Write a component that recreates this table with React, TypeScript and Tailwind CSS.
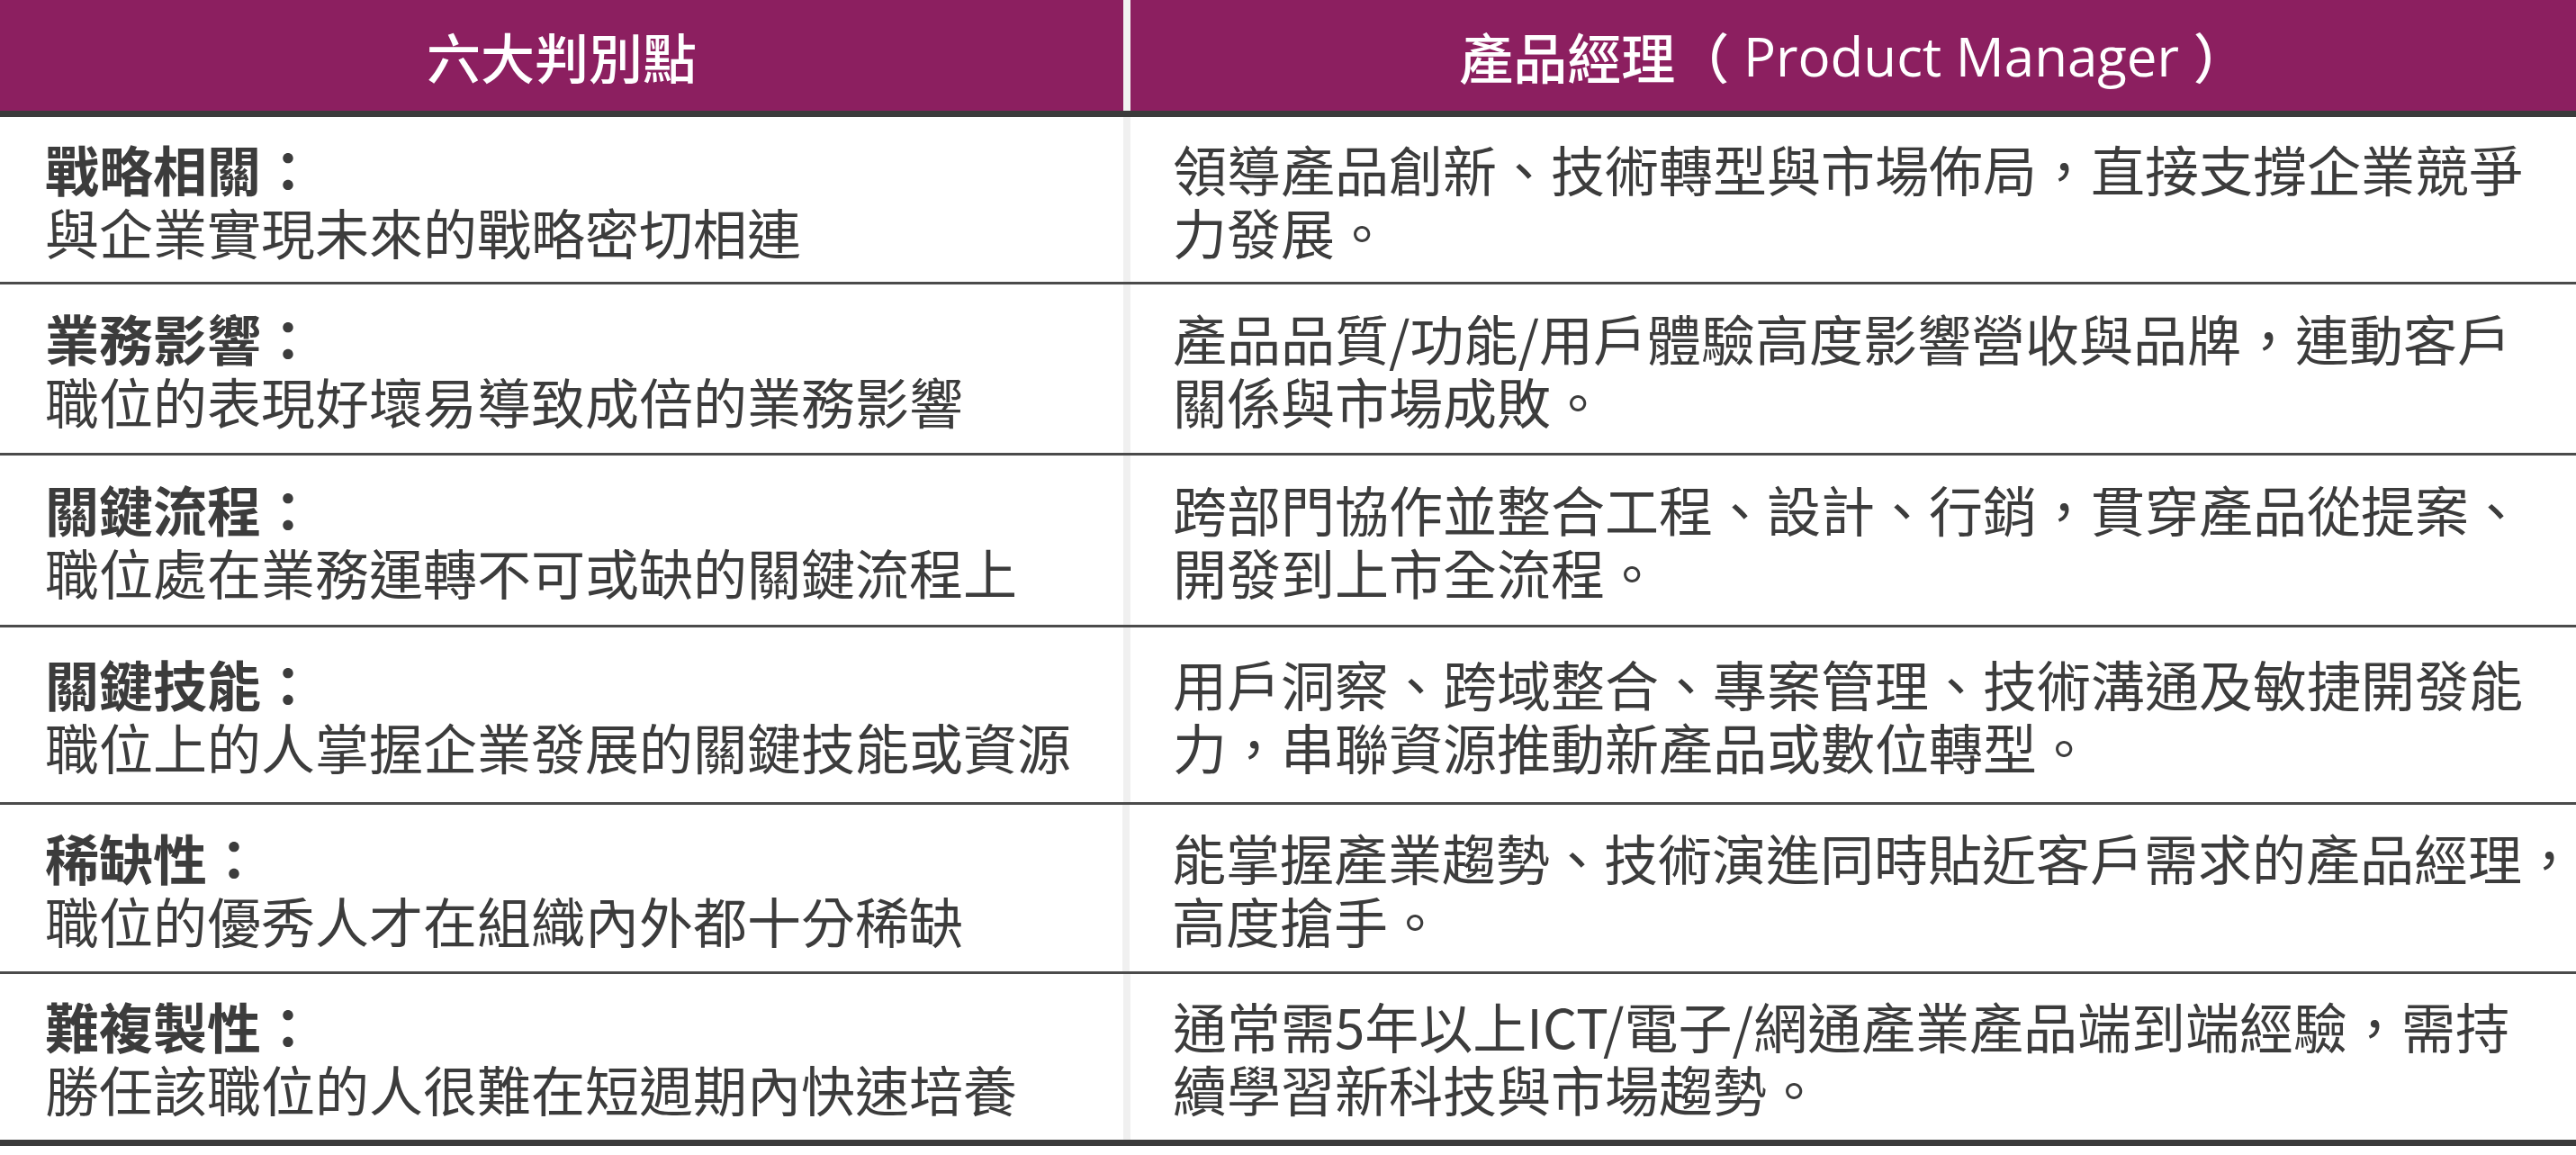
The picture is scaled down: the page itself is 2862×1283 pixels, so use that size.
const rows = [
  {
    title: "戰略相關：",
    desc: "與企業實現未來的戰略密切相連",
    pm: ["領導產品創新、技術轉型與市場佈局，直接支撐企業競爭", "力發展。"],
    h: "h-[183px]",
  },
  {
    title: "業務影響：",
    desc: "職位的表現好壞易導致成倍的業務影響",
    pm: ["產品品質/功能/用戶體驗高度影響營收與品牌，連動客戶", "關係與市場成敗。"],
    h: "h-[187px]",
  },
  {
    title: "關鍵流程：",
    desc: "職位處在業務運轉不可或缺的關鍵流程上",
    pm: ["跨部門協作並整合工程、設計、行銷，貫穿產品從提案、", "開發到上市全流程。"],
    h: "h-[188px]",
  },
  {
    title: "關鍵技能：",
    desc: "職位上的人掌握企業發展的關鍵技能或資源",
    pm: ["用戶洞察、跨域整合、專案管理、技術溝通及敏捷開發能", "力，串聯資源推動新產品或數位轉型。"],
    h: "h-[194px]",
  },
  {
    title: "稀缺性：",
    desc: "職位的優秀人才在組織內外都十分稀缺",
    pm: ["能掌握產業趨勢、技術演進同時貼近客戶需求的產品經理，", "高度搶手。"],
    h: "h-[185px]",
  },
  {
    title: "難複製性：",
    desc: "勝任該職位的人很難在短週期內快速培養",
    pm: ["通常需5年以上ICT/電子/網通產業產品端到端經驗，需持", "續學習新科技與市場趨勢。"],
    h: "h-[184px]",
  },
];

export default function App() {
  return (
    <div className="h-[1283px] w-[2862px] overflow-hidden bg-white font-['Noto_Sans_CJK_TC','Noto_Sans',sans-serif] text-[60px] leading-[70px] text-[#3c3c3c]">
      {/* Header */}
      <div className="flex h-[123px]">
        <div className="flex w-[1248px] items-center justify-center bg-[#8c1f60] font-medium text-white">
          六大判別點
        </div>
        <div className="w-[8px] bg-[#f2f2f2]" />
        <div className="flex flex-1 items-center justify-center whitespace-pre bg-[#8c1f60] font-medium text-white">
          產品經理（<span className="font-['Open_Sans','Noto_Sans',sans-serif]"> Product Manager </span>）
        </div>
      </div>
      <div className="h-[7px] bg-[#3b3b3b]" />

      {rows.map((r, i) => (
        <div key={r.title}>
          <div className={`flex ${r.h}`}>
            <div className="flex w-[1248px] flex-col justify-center whitespace-nowrap pl-[50px]">
              <div className="font-bold">{r.title}</div>
              <div>{r.desc}</div>
            </div>
            <div className="w-[8px] bg-[#f0f0f0]" />
            <div className="flex flex-1 flex-col justify-center whitespace-nowrap pl-[47px]">
              {r.pm.map((line) => (
                <div key={line}>{line}</div>
              ))}
            </div>
          </div>
          {i < rows.length - 1 && <div className="h-[3px] bg-[#4b4b4b]" />}
        </div>
      ))}

      <div className="h-[7px] bg-[#3b3b3b]" />
    </div>
  );
}
